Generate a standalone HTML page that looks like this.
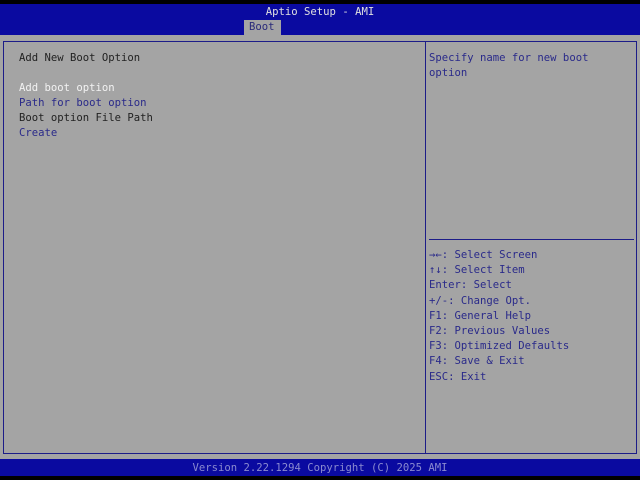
<!DOCTYPE html><html><head><style>
body{margin:0;width:640px;height:480px;background:#000;position:relative;overflow:hidden;font-family:"DejaVu Sans Mono","Liberation Mono",monospace;font-size:10.6px}
div{position:absolute}
.t{white-space:pre;line-height:15.2px}
</style></head><body>
<div style="left:0;top:4px;width:640px;height:31px;background:#0a0aa0"></div>
<div class="t" style="left:0;top:5px;width:640px;text-align:center;color:#e0e0e0">Aptio Setup - AMI</div>
<div style="left:244px;top:20px;width:37px;height:15px;background:#a4a4a4"></div>
<div class="t" style="left:249px;top:20px;color:#2a2a7a">Boot</div>
<div style="left:0;top:35px;width:640px;height:424px;background:#a4a4a4"></div>
<div style="left:3px;top:41px;width:632px;height:411px;border:1px solid #1c1c88"></div>
<div style="left:425px;top:41px;width:1px;height:412px;background:#1c1c88"></div>
<div style="left:429px;top:239px;width:205px;height:1px;background:#1c1c88"></div>
<div class="t" style="left:19px;top:51px;color:#222">Add New Boot Option</div>
<div class="t" style="left:19px;top:81px;color:#f2f2f2">Add boot option</div>
<div class="t" style="left:19px;top:96px;color:#2a2a8a">Path for boot option</div>
<div class="t" style="left:19px;top:111px;color:#222">Boot option File Path</div>
<div class="t" style="left:19px;top:126px;color:#2a2a8a">Create</div>
<div class="t" style="left:429px;top:51px;color:#2a2a8a">Specify name for new boot
option</div>
<div class="t" style="left:429px;top:248px;color:#2a2a8a">→←: Select Screen
↑↓: Select Item
Enter: Select
+/-: Change Opt.
F1: General Help
F2: Previous Values
F3: Optimized Defaults
F4: Save &amp; Exit
ESC: Exit</div>
<div style="left:0;top:459px;width:640px;height:17px;background:#0a0aa0"></div>
<div class="t" style="left:0;top:461px;width:640px;text-align:center;color:#8a8ad0">Version 2.22.1294 Copyright (C) 2025 AMI</div>
</body></html>
